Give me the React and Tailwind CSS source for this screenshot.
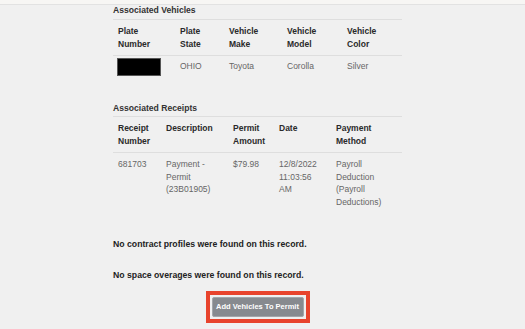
const vehicleCols = [
  { label: ["Plate", "Number"], w: "w-[62px]" },
  { label: ["Plate", "State"], w: "w-[49px]" },
  { label: ["Vehicle", "Make"], w: "w-[58px]" },
  { label: ["Vehicle", "Model"], w: "w-[60px]" },
  { label: ["Vehicle", "Color"], w: "w-[60px]" },
];

const receiptCols = [
  { label: ["Receipt", "Number"], w: "w-[48px]" },
  { label: ["Description"], w: "w-[67px]" },
  { label: ["Permit", "Amount"], w: "w-[46px]" },
  { label: ["Date"], w: "w-[57px]" },
  { label: ["Payment", "Method"], w: "w-[71px]" },
];

const HeadRow = ({ cols }) => (
  <tr className="border-b border-[#dedede]">
    {cols.map((c) => (
      <th
        key={c.label.join(" ")}
        className={`${c.w} px-[5px] py-[5px] text-left align-top font-bold text-[#2a2a2a]`}
      >
        {c.label.map((l) => (
          <div key={l}>{l}</div>
        ))}
      </th>
    ))}
  </tr>
);

const App = () => {
  return (
    <div
      className="h-[329px] w-full overflow-hidden bg-[#f0f0f0] text-[8.5px] leading-[12.5px]"
      style={{ fontFamily: '"Liberation Sans", Arial, sans-serif' }}
    >
      <div className="h-[5px] border-b border-[#e2e2e2] bg-[#f7f6f4]" />

      <div className="ml-[113px] w-[289px]">
        <h3 className="-mt-px text-[8.6px] font-bold leading-[12px] text-[#333]">Associated Vehicles</h3>
        <table className="mt-[3px] w-full table-fixed border-t border-[#dedede]">
          <thead>
            <HeadRow cols={vehicleCols} />
          </thead>
          <tbody className="text-[#666]">
            <tr>
              <td className="px-[4px] pt-[2px] pb-[1px] align-middle">
                <div className="h-[18px] w-[44px] border border-[#555] bg-black" />
              </td>
              <td className="px-[5px] align-middle">OHIO</td>
              <td className="px-[5px] align-middle">Toyota</td>
              <td className="px-[5px] align-middle">Corolla</td>
              <td className="px-[5px] align-middle">Silver</td>
            </tr>
          </tbody>
        </table>

        <h3 className="mt-[25px] text-[8.6px] font-bold leading-[12px] text-[#333]">Associated Receipts</h3>
        <table className="mt-[2px] w-full table-fixed border-t border-[#dedede]">
          <thead>
            <HeadRow cols={receiptCols} />
          </thead>
          <tbody className="text-[#666]">
            <tr>
              <td className="px-[5px] pt-[5px] pb-[4px] align-top">681703</td>
              <td className="px-[5px] pt-[5px] align-top">Payment - Permit (23B01905)</td>
              <td className="px-[5px] pt-[5px] align-top">$79.98</td>
              <td className="px-[5px] pt-[5px] align-top">12/8/2022 11:03:56 AM</td>
              <td className="px-[5px] pt-[5px] align-top">Payroll Deduction (Payroll Deductions)</td>
            </tr>
          </tbody>
        </table>

        <p className="mt-[30px] text-[8.7px] font-bold leading-[12px] text-[#222]">
          No contract profiles were found on this record.
        </p>
        <p className="mt-[19px] text-[8.7px] font-bold leading-[12px] text-[#222]">
          No space overages were found on this record.
        </p>

        <div className="mt-[10px] flex justify-center">
          <div className="border-[4px] border-[#e8432c] p-[2px]">
            <button className="h-[20px] w-[92px] rounded-[2px] border border-[#a3a6aa] bg-[#878a8f] text-[7.5px] font-bold text-white">
              Add Vehicles To Permit
            </button>
          </div>
        </div>
      </div>
    </div>
  );
};

export default App;
